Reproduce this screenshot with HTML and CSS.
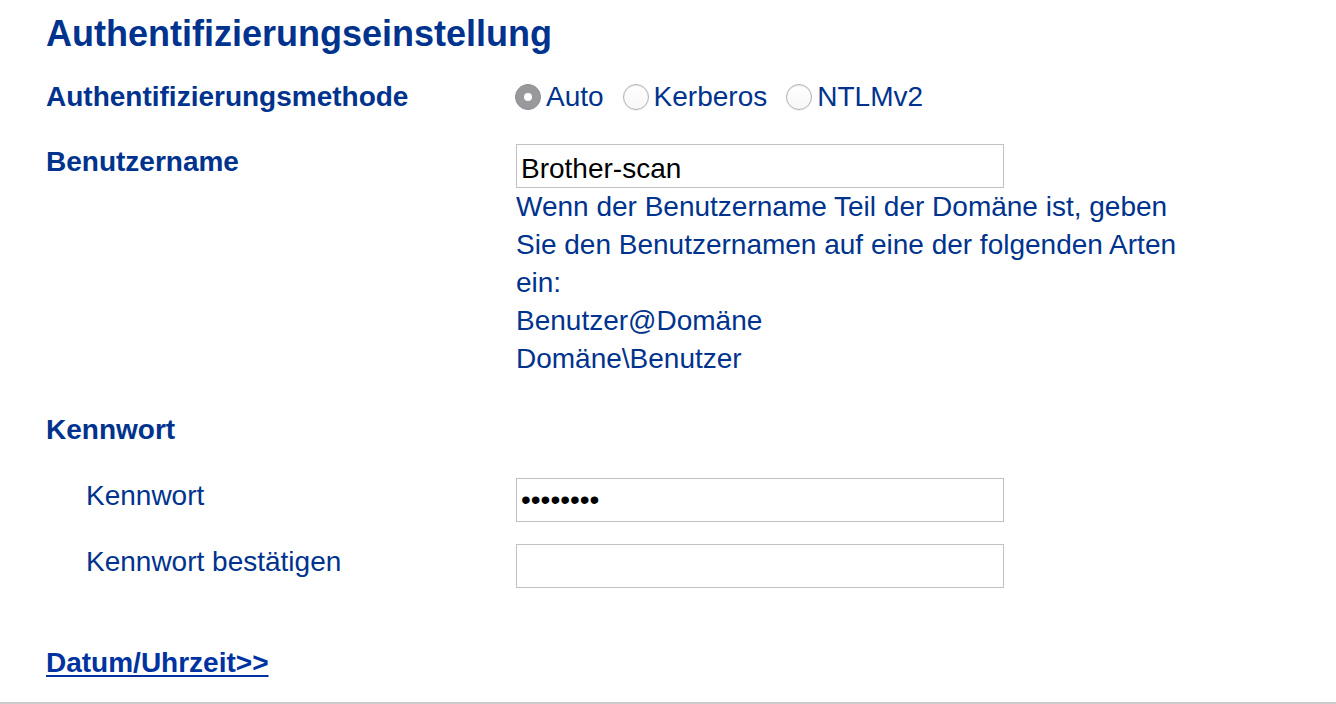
FILE: index.html
```html
<!DOCTYPE html>
<html lang="de">
<head>
<meta charset="utf-8">
<title>Authentifizierungseinstellung</title>
<link rel="stylesheet" href="styles.css">
</head>
<body>
<main class="page">
  <h1 class="title">Authentifizierungseinstellung</h1>

  <div class="row row-method">
    <div class="label label-bold">Authentifizierungsmethode</div>
    <div class="value radios">
      <label class="radio"><input type="radio" name="method" checked><span>Auto</span></label>
      <label class="radio"><input type="radio" name="method"><span>Kerberos</span></label>
      <label class="radio"><input type="radio" name="method"><span>NTLMv2</span></label>
    </div>
  </div>

  <div class="row row-user">
    <div class="label label-bold">Benutzername</div>
    <div class="value">
      <input class="field field-text" type="text" value="Brother-scan">
      <p class="hint">Wenn der Benutzername Teil der Domäne ist, geben Sie den Benutzernamen auf eine der folgenden Arten ein:<br>Benutzer@Domäne<br>Domäne\Benutzer</p>
    </div>
  </div>

  <div class="section-label label-bold">Kennwort</div>

  <div class="row row-sub row-pw">
    <div class="label label-sub">Kennwort</div>
    <div class="value"><input class="field" type="password" value="12345678"></div>
  </div>

  <div class="row row-sub row-confirm">
    <div class="label label-sub">Kennwort bestätigen</div>
    <div class="value"><input class="field" type="password" value=""></div>
  </div>

  <a class="next-link" href="#">Datum/Uhrzeit&gt;&gt;</a>
</main>
</body>
</html>
```

FILE: styles.css
```css
html, body {
  margin: 0;
  padding: 0;
  background: #fff;
}

body {
  font-family: "Liberation Sans", Arial, Helvetica, sans-serif;
  font-size: 28px;
  line-height: 38px;
  color: #00338d;
}

.page {
  box-sizing: border-box;
  height: 704px;
  padding: 12px 0 0 46px;
  border-bottom: 2px solid #cccccc;
  display: flex;
  flex-direction: column;
  align-items: flex-start;
}

.title {
  margin: 0;
  font-size: 36px;
  line-height: 44px;
  font-weight: bold;
}

.row {
  display: grid;
  grid-template-columns: 470px 1fr;
  align-items: start;
}

.label-bold {
  font-weight: bold;
}

.label-sub {
  padding-left: 40px;
}

.row-method {
  margin-top: 22px;
}

.row-user {
  margin-top: 27px;
}

.row-user .field {
  margin-top: 1px;
}

.section-label {
  margin-top: 33px;
}

.row-pw {
  margin-top: 28px;
}

.row-confirm {
  margin-top: 21px;
}

.row-sub .field {
  margin-top: 1px;
}

/* radio group */
.radios {
  display: flex;
  align-items: center;
  gap: 19px;
  margin-left: -1px;
}

.radio {
  display: flex;
  align-items: center;
  gap: 5px;
}

.radio input {
  appearance: none;
  -webkit-appearance: none;
  margin: 0;
  width: 26px;
  height: 26px;
  border-radius: 50%;
  box-sizing: border-box;
  border: 1px solid #b4b4b4;
  background: linear-gradient(#ffffff, #f7f7f7);
  box-shadow: inset 0 1px 1px rgba(0, 0, 0, 0.1), 0 0.5px 1px rgba(0, 0, 0, 0.12);
  position: relative;
}

.radio input:checked {
  border-color: #8d8d92;
  background: #98989d;
  box-shadow: none;
}

.radio input:checked::after {
  content: "";
  position: absolute;
  left: 50%;
  top: 50%;
  width: 8px;
  height: 8px;
  margin: -4px 0 0 -4px;
  border-radius: 50%;
  background: #fff;
}

/* text fields */
.field {
  display: block;
  box-sizing: border-box;
  width: 488px;
  height: 44px;
  margin: 0;
  padding: 0 4px;
  border: 1px solid #c2c2c2;
  border-radius: 0;
  background: #fff;
  font-family: "Liberation Sans", Arial, Helvetica, sans-serif;
  font-size: 28px;
  color: #000;
  outline: none;
}

.field-text {
  padding-top: 6px;
}

.hint {
  margin: 0;
  max-width: 680px;
}

.next-link {
  margin-top: 56px;
  font-weight: bold;
  color: #0033a0;
  text-decoration: underline;
  text-underline-offset: 3px;
}
```
